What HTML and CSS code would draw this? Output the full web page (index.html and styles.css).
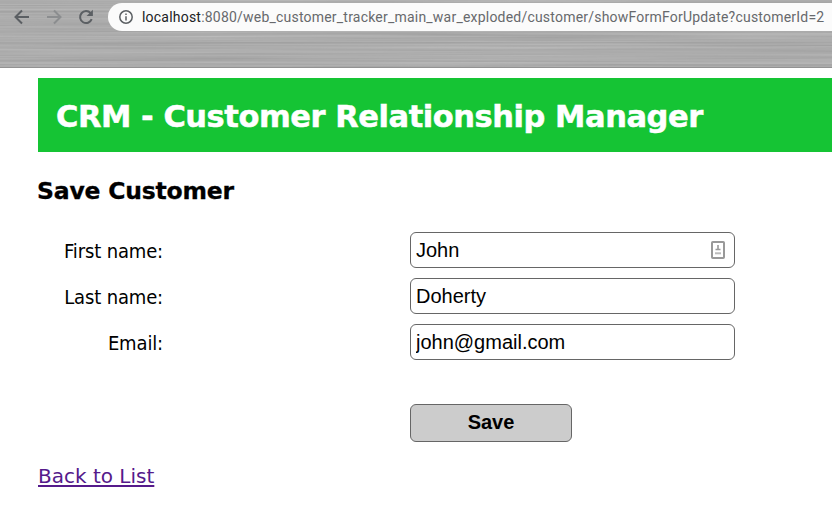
FILE: index.html
```html
<!DOCTYPE html>
<html lang="en">
<head>
<meta charset="utf-8">
<title>Save Customer</title>
<link rel="stylesheet" href="styles.css">
</head>
<body>
<div class="toolbar">
  <svg class="metal" width="832" height="68" aria-hidden="true">
    <filter id="brushed" x="0" y="0" width="100%" height="100%" color-interpolation-filters="sRGB">
      <feTurbulence type="fractalNoise" baseFrequency="0.003 0.45" numOctaves="3" seed="8"/>
      <feColorMatrix values="0.14 0 0 0 0.605  0.14 0 0 0 0.605  0.14 0 0 0 0.605  0 0 0 0 1"/>
    </filter>
    <rect width="832" height="68" filter="url(#brushed)"/>
  </svg>
  <nav class="controls">
    <svg class="icon" viewBox="0 0 16 16"><path d="M15 8H2M8 1.5 1.5 8 8 14.5"/></svg>
    <svg class="icon faded" viewBox="0 0 16 16"><path d="M1 8h13M8 1.5 14.5 8 8 14.5"/></svg>
    <svg class="icon" viewBox="0 0 16 16"><path d="M13.7 10.2A6 6 0 1 1 12.6 4.1"/><path class="solid" d="M14.9.8v6.3H8.6z"/></svg>
    <div class="address">
      <svg class="info" viewBox="0 0 14 14"><circle cx="7" cy="7" r="6.2"/><path d="M7 6.2v4.2M7 3.5v1.5"/></svg>
      <span class="url"><b>localhost</b>:8080/web_customer_tracker_main_war_exploded/customer/showFormForUpdate?customerId=2</span>
    </div>
  </nav>
</div>
<main>
  <header><h1>CRM - Customer Relationship Manager</h1></header>
  <h2>Save Customer</h2>
  <form>
    <label for="first">First name:</label>
    <div class="field"><input id="first" value="John">
      <svg class="contact" viewBox="0 0 16 20"><rect class="frame" x="2" y="2" width="12" height="16" rx=".8"/><path class="person" d="M8 5v5M5.5 9.5h5"/><path class="line" d="M5 13.3h6"/></svg>
    </div>
    <label for="last">Last name:</label>
    <div class="field"><input id="last" value="Doherty"></div>
    <label for="email">Email:</label>
    <div class="field"><input id="email" value="john@gmail.com"></div>
    <button type="button">Save</button>
  </form>
  <a href="#">Back to List</a>
</main>
</body>
</html>
```
FILE: styles.css
```css
* { box-sizing: border-box; }
body { margin: 0; height: 505px; overflow: hidden; background: #fff; color: #000; font-family: "DejaVu Sans", sans-serif; }
.toolbar { position: relative; height: 68px; background: #acacac; border-bottom: 1px solid #929292; overflow: hidden; }
.metal { position: absolute; top: 0; left: 0; }
.controls { position: relative; display: flex; padding: 3px 0 0 14px; align-items: center; }
.icon { width: 16px; height: 16px; margin-right: 16px; flex: none; fill: none; stroke: #5b5f63; stroke-width: 2; }
.icon .solid { fill: #5b5f63; stroke: none; }
.faded { stroke: #8b8d8f; }
.address { display: flex; align-items: center; flex: 1; height: 28px; margin-left: -2px; padding-left: 11px; border-radius: 14px 0 0 14px; background: #fbfbfb; }
.info { width: 14px; height: 14px; margin-right: 9px; flex: none; fill: none; stroke: #5b5f63; stroke-width: 1.5; }
.url { font: 14px Roboto, sans-serif; letter-spacing: .21px; color: #67696c; white-space: nowrap; }
.url b { font-weight: 400; color: #202124; }
main { padding: 10px 0 0 38px; }
header { display: flex; align-items: center; height: 74px; padding: 3px 0 0 18px; background: #15c434; color: #fff; }
h1 { margin: 0; font-size: 30.5px; line-height: 40px; letter-spacing: -.45px; -webkit-text-stroke: .5px #fff; white-space: nowrap; }
h2 { margin: 25px 0 26px -1px; font-size: 23.5px; line-height: 29px; letter-spacing: -.2px; -webkit-text-stroke: .3px #000; }
form { display: grid; grid-template-columns: 125px 325px; column-gap: 247px; row-gap: 10px; }
label { height: 36px; text-align: right; font: 20px/38px "DejaVu Sans Condensed", "DejaVu Sans", sans-serif; letter-spacing: -.15px; white-space: nowrap; }
.field { position: relative; height: 36px; }
input { display: block; width: 325px; height: 36px; padding: 0 5px; border: 1px solid #666; border-radius: 6px; background: #fff; color: #000; font: 20px "Liberation Sans", sans-serif; }
.contact { position: absolute; top: 8px; right: 9px; width: 16px; height: 20px; fill: none; stroke: #999; stroke-width: 2; }
.contact .person { stroke-width: 1.6; }
.contact .line { stroke: #bbb; }
button { grid-column: 2; width: 162px; height: 38px; margin-top: 34px; padding: 0 0 2px; border: 1px solid #666; border-radius: 6px; background: #ccc; color: #000; font: bold 20px "Liberation Sans", sans-serif; }
a { display: inline-block; margin-top: 22px; font-size: 20px; line-height: 24px; letter-spacing: 0; color: #551a8b; text-underline-offset: 2px; }
```
